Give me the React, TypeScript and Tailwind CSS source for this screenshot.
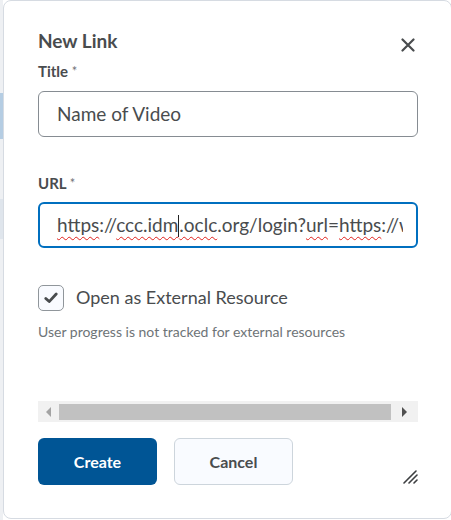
import React from "react";

const font = { fontFamily: "Lato, 'Noto Sans', sans-serif" };

function Misspelt({ children }: { children: React.ReactNode }) {
  return (
    <span className="underline decoration-wavy decoration-[#e0201b] decoration-1 underline-offset-[4px]">
      {children}
    </span>
  );
}

function CloseIcon() {
  return (
    <svg width="14" height="14" viewBox="0 0 14 14" fill="none">
      <path
        d="M1.5 1.5 L12.5 12.5 M12.5 1.5 L1.5 12.5"
        stroke="#494c4e"
        strokeWidth="2.2"
        strokeLinecap="round"
      />
    </svg>
  );
}

function CheckIcon() {
  return (
    <svg width="14" height="12" viewBox="0 0 14 12" fill="none">
      <path
        d="M1.8 6.4 L5.2 9.6 L12.2 2"
        stroke="#494c4e"
        strokeWidth="2.8"
        strokeLinecap="round"
        strokeLinejoin="round"
      />
    </svg>
  );
}

function ResizeHandle() {
  return (
    <svg width="15" height="15" viewBox="0 0 15 15" fill="none">
      <path
        d="M1 14 L13 2 M6 14 L14 6 M11 14 L14 11"
        stroke="#3d3f41"
        strokeWidth="1.6"
        strokeLinecap="round"
      />
    </svg>
  );
}

export default function App() {
  return (
    <div
      className="w-[451px] h-[520px] flex overflow-hidden bg-white text-[#494c4e]"
      style={font}
    >
      {/* page behind the dialog */}
      <div className="w-[3px] shrink-0 flex flex-col bg-[#eef0f3]">
        <div className="h-[93px]" />
        <div className="h-[46px] bg-[#b5cde3]" />
        <div className="h-[60px]" />
        <div className="h-[40px] bg-[#dfe5ec]" />
      </div>

      <div className="w-[449px] h-[519px] shrink-0 border border-[#d6dbe2] rounded-[8px] bg-white pl-[34px] pr-[33px] pt-[29px] flex flex-col">
        <div className="flex items-start justify-between">
          <h2 className="text-[19px] leading-[22px] font-bold text-[#494c4e]">
            New Link
          </h2>
          <div className="mt-[8px] mr-[3px]">
            <CloseIcon />
          </div>
        </div>

        <label className="mt-[10px] text-[15px] leading-[18px] font-bold">
          Title <span className="font-normal text-[#6e7477] text-[13px] align-top">*</span>
        </label>
        <div className="mt-[11px] h-[46px] rounded-[6px] border border-[#868c92] flex items-center px-[18px] text-[19px] text-[#494c4e]">
          Name of Video
        </div>

        <label className="mt-[37px] text-[15px] leading-[18px] font-bold">
          URL <span className="font-normal text-[#6e7477] text-[13px] align-top">*</span>
        </label>
        <div className="mt-[10px] h-[46px] rounded-[6px] border-2 border-[#006fbf] flex items-center pl-[17px] pr-[13px] text-[19px] text-[#494c4e]">
          <div className="flex-1 overflow-hidden whitespace-nowrap pb-[4px] pt-[4px]">
            <Misspelt>https</Misspelt>://
            <Misspelt>ccc.idm</Misspelt>
            <span className="inline-block w-0 h-[22px] border-l border-[#222] align-[-5px]" />
            <Misspelt>.oclc</Misspelt>.org/login?<Misspelt>url</Misspelt>=
            <Misspelt>https</Misspelt>://www.jstor.org
          </div>
        </div>

        <div className="mt-[36px] flex items-center gap-[12px]">
          <div className="w-[26px] h-[26px] rounded-[5px] border border-[#90969b] bg-[#f9fbff] flex items-center justify-center">
            <CheckIcon />
          </div>
          <span className="text-[18px] text-[#494c4e]">Open as External Resource</span>
        </div>
        <p className="mt-[12px] text-[14px] leading-[18px] text-[#6e7477]">
          User progress is not tracked for external resources
        </p>

        <div className="mt-[60px] h-[21px] bg-[#f1f1f1] flex items-center">
          <div className="w-[21px] flex justify-center">
            <div className="w-0 h-0 border-y-[5px] border-y-transparent border-r-[5px] border-r-[#a3a3a3]" />
          </div>
          <div className="flex-1 h-[16px] bg-[#c1c1c1]" />
          <div className="w-[27px] flex justify-center">
            <div className="w-0 h-0 border-y-[5px] border-y-transparent border-l-[5px] border-l-[#505050]" />
          </div>
        </div>

        <div className="mt-[16px] flex items-end">
          <button className="w-[119px] h-[47px] rounded-[6px] bg-[#005595] text-white text-[16px] font-bold">
            Create
          </button>
          <button className="ml-[17px] w-[119px] h-[47px] rounded-[6px] bg-[#f9fbff] border border-[#cdd5dc] text-[#494c4e] text-[16px] font-bold">
            Cancel
          </button>
          <div className="ml-auto mb-[1px]">
            <ResizeHandle />
          </div>
        </div>
      </div>
    </div>
  );
}
